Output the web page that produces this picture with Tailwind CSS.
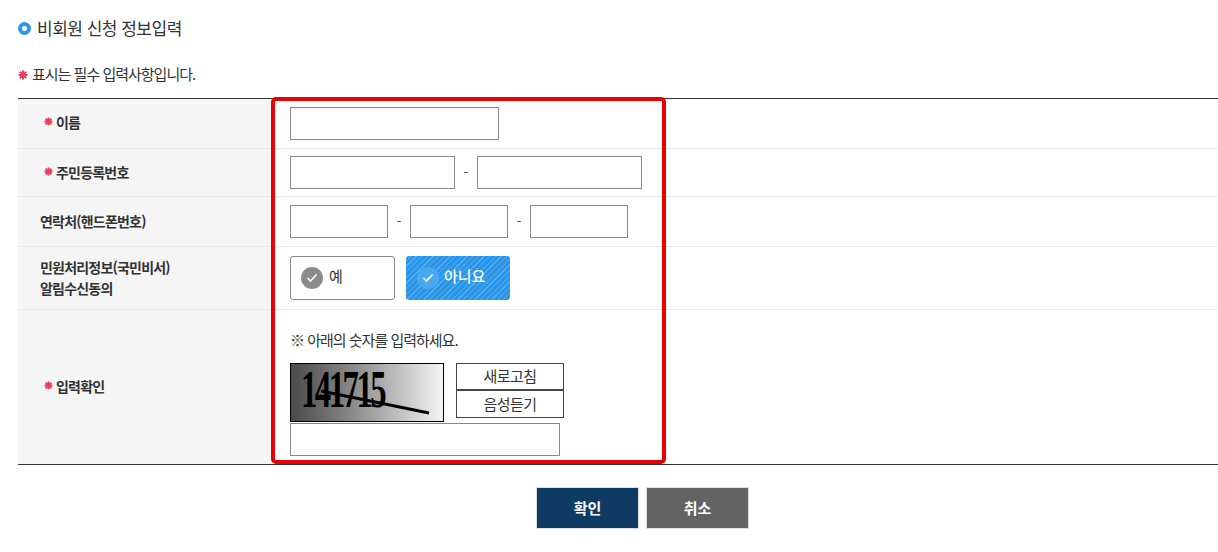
<!DOCTYPE html>
<html lang="ko">

<head>
    <meta charset="UTF-8">
    <meta name="viewport" content="width=device-width, initial-scale=1.0">
    <title>비회원 신청 정보입력</title>
    <script src="https://cdn.jsdelivr.net/npm/@tailwindcss/browser@4"></script>
</head>

<body class="bg-white font-['Noto_Sans_CJK_KR','Noto_Sans',sans-serif] text-[#333] overflow-hidden">
    <div class="relative w-[1218px] h-[552px] pl-[18px]">
        <!-- Title -->
        <div class="flex items-center gap-[6px] h-[56px]">
            <span class="w-[13px] h-[13px] rounded-full border-[4px] border-[#2f96e6] bg-white"></span>
            <h2 class="text-[17px] tracking-[-0.5px] font-normal text-[#333]">비회원 신청 정보입력</h2>
        </div>
        <p class="flex items-center h-[36px] pt-[1px] text-[15px] tracking-[-1px] text-[#333]">
            <svg class="mr-[4px]" width="10" height="10" viewBox="0 0 10 10" stroke="#e0405a" stroke-width="2"><path d="M5 .5v9M.5 5h9M1.8 1.8l6.4 6.4M8.2 1.8L1.8 8.2"/></svg>표시는 필수 입력사항입니다.
        </p>
        <div class="h-[6px]"></div>

        <!-- Form table -->
        <div class="border-t border-b border-[#333] w-[1200px]">
            <div class="flex h-[50px] border-b border-[#e8e8e8]">
                <div class="w-[254px] bg-[#f5f5f5] flex items-center pl-[26px] pb-[2px] text-[14px] font-bold tracking-[-0.8px] text-[#333]">
                    <svg class="mr-[3px] mb-[2px]" width="9" height="9" viewBox="0 0 10 10" stroke="#e0405a" stroke-width="2.1"><path d="M5 .5v9M.5 5h9M1.8 1.8l6.4 6.4M8.2 1.8L1.8 8.2"/></svg>이름
                </div>
                <div class="flex items-center pl-[18px] pb-[1px]">
                    <input type="text" class="w-[209px] h-[33px] border border-[#888] bg-white">
                </div>
            </div>
            <div class="flex h-[48px] border-b border-[#e8e8e8]">
                <div class="w-[254px] bg-[#f5f5f5] flex items-center pl-[26px] text-[14px] font-bold tracking-[-0.8px] text-[#333]">
                    <svg class="mr-[3px] mb-[2px]" width="9" height="9" viewBox="0 0 10 10" stroke="#e0405a" stroke-width="2.1"><path d="M5 .5v9M.5 5h9M1.8 1.8l6.4 6.4M8.2 1.8L1.8 8.2"/></svg>주민등록번호
                </div>
                <div class="flex items-center pl-[18px]">
                    <input type="text" class="w-[165px] h-[33px] border border-[#888] bg-white">
                    <span class="w-[22px] text-center text-[14px] text-[#555]">-</span>
                    <input type="text" class="w-[165px] h-[33px] border border-[#888] bg-white">
                </div>
            </div>
            <div class="flex h-[50px] border-b border-[#e8e8e8]">
                <div class="w-[254px] bg-[#f5f5f5] flex items-center pl-[22px] text-[14px] font-bold tracking-[-0.8px] text-[#333]">
                    연락처(핸드폰번호)
                </div>
                <div class="flex items-center pl-[18px] pb-[1px]">
                    <input type="text" class="w-[98px] h-[33px] border border-[#888] bg-white">
                    <span class="w-[22px] text-center text-[14px] text-[#555]">-</span>
                    <input type="text" class="w-[98px] h-[33px] border border-[#888] bg-white">
                    <span class="w-[22px] text-center text-[14px] text-[#555]">-</span>
                    <input type="text" class="w-[98px] h-[33px] border border-[#888] bg-white">
                </div>
            </div>
            <div class="flex h-[63px] border-b border-[#e8e8e8]">
                <div class="w-[254px] bg-[#f5f5f5] flex items-center pl-[22px] pb-[1px] text-[14px] leading-[21px] font-bold tracking-[-0.8px] text-[#333]">
                    <span>민원처리정보(국민비서)<br>알림수신동의</span>
                </div>
                <div class="flex items-center gap-[11px] pl-[18px] pb-[1px]">
                    <button type="button" class="w-[105px] h-[44px] flex items-center gap-[6px] pl-[10px] border border-[#888] rounded-[3px] bg-white text-[15px] text-[#333] pb-[2px]">
                        <span class="w-[22px] h-[22px] mt-[2px] rounded-full bg-[#8c8c8c] flex items-center justify-center">
                            <svg width="12" height="10" viewBox="0 0 12 10" fill="none" stroke="#fff" stroke-width="1.6"><path d="M1.5 5l3 3 6-6.5"/></svg>
                        </span>예
                    </button>
                    <button type="button" class="w-[104px] h-[44px] flex items-center gap-[5px] pl-[11px] pb-[2px] rounded-[3px] text-[15px] font-medium text-white bg-[repeating-linear-gradient(135deg,#2b95ea_0px,#2b95ea_3px,#55aef0_3px,#55aef0_4px)]">
                        <span class="w-[22px] h-[22px] mt-[3px] rounded-full bg-[#4aa8f0] flex items-center justify-center">
                            <svg width="12" height="10" viewBox="0 0 12 10" fill="none" stroke="#fff" stroke-width="1.6"><path d="M1.5 5l3 3 6-6.5"/></svg>
                        </span>아니요
                    </button>
                </div>
            </div>
            <div class="flex h-[154px]">
                <div class="w-[254px] bg-[#f5f5f5] flex items-center pl-[26px] pb-[2px] text-[14px] font-bold tracking-[-0.8px] text-[#333]">
                    <svg class="mr-[3px] mb-[2px]" width="9" height="9" viewBox="0 0 10 10" stroke="#e0405a" stroke-width="2.1"><path d="M5 .5v9M.5 5h9M1.8 1.8l6.4 6.4M8.2 1.8L1.8 8.2"/></svg>입력확인
                </div>
                <div class="pl-[18px] pt-[19px]">
                    <p class="h-[21px] leading-[21px] text-[15px] tracking-[-1px] text-[#333]">※ 아래의 숫자를 입력하세요.</p>
                    <div class="flex gap-[12px] mt-[13px]">
                        <!-- Captcha -->
                        <div class="relative w-[154px] h-[59px] border border-black bg-gradient-to-r from-[#4a4a4a] to-[#f5f5f5]">
                            <span class="absolute left-[10px] top-[2px] font-['Liberation_Serif',serif] text-[52px] leading-[48px] font-bold tracking-[-4px] text-black scale-x-[0.63] origin-left">141715</span>
                            <svg class="absolute inset-0" width="152" height="57" fill="none" stroke="#000" stroke-width="3"><path d="M30 27L138 49"/></svg>
                        </div>
                        <div class="flex flex-col">
                            <button type="button" class="w-[108px] h-[28px] border border-[#444] border-b-2 bg-white text-[15px] tracking-[-0.6px] text-[#333]">새로고침</button>
                            <button type="button" class="w-[108px] h-[27px] border border-t-0 border-[#444] bg-white text-[15px] tracking-[-0.6px] text-[#333]">음성듣기</button>
                        </div>
                    </div>
                    <input type="text" class="block w-[270px] h-[33px] mt-[1px] border border-[#888] bg-white">
                </div>
            </div>
        </div>

        <!-- Buttons -->
        <div class="flex gap-[7px] mt-[22px] ml-[518px]">
            <button type="button" class="w-[103px] h-[42px] border border-[#ddd] bg-[#0f3a63] text-[15px] font-bold text-white">확인</button>
            <button type="button" class="w-[103px] h-[42px] border border-[#ddd] bg-[#636363] text-[15px] font-bold text-white">취소</button>
        </div>

        <!-- Annotation box -->
        <div class="absolute left-[271px] top-[97px] w-[395px] h-[367px] border-[4px] border-[#ea0000] rounded-[5px] pointer-events-none"></div>
    </div>
</body>

</html>
